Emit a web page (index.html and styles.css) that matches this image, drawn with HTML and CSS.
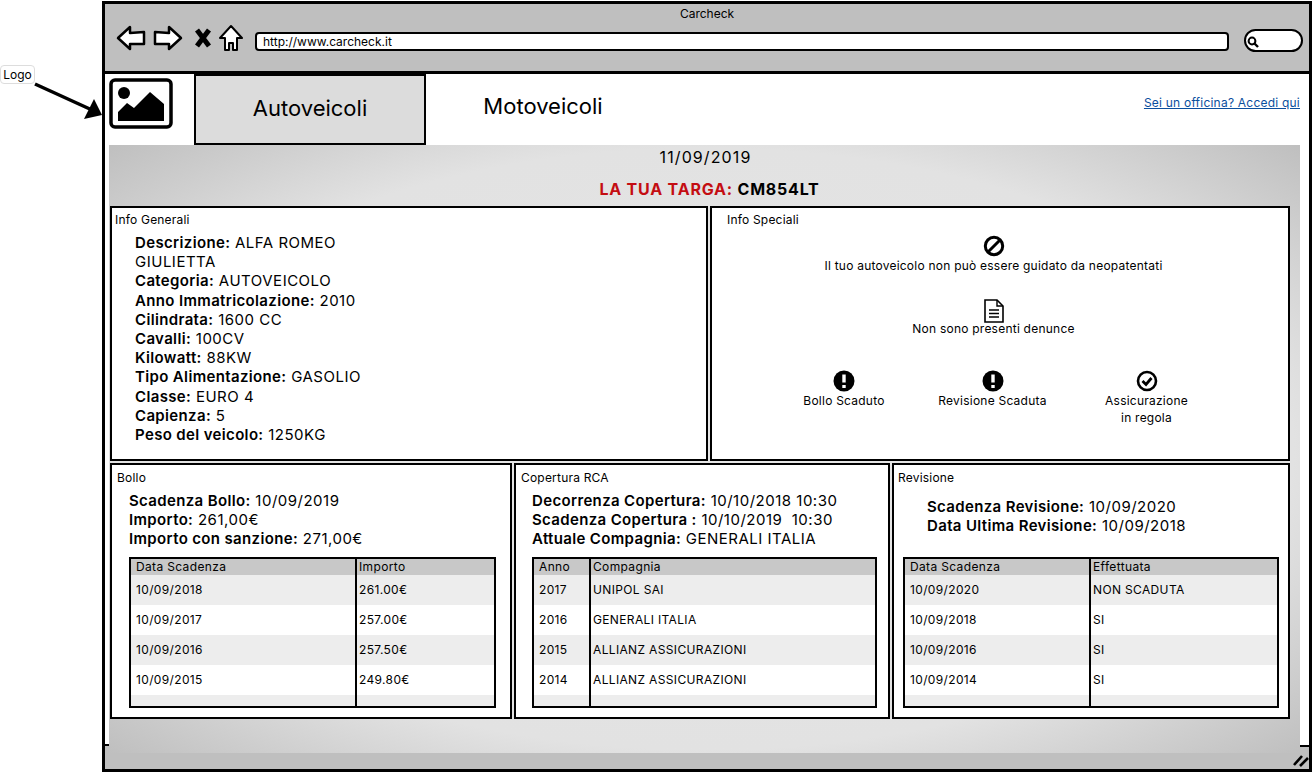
FILE: index.html
```html
<!DOCTYPE html>
<html lang="en">

<head>
    <meta charset="UTF-8">
    <title>Carcheck</title>
    <link rel="stylesheet" href="styles.css">
</head>

<body>

    <!-- Annotation outside the browser window -->
    <div class="callout">Logo</div>
    <svg class="callout-arrow" width="72" height="40" viewBox="0 0 72 40">
        <path d="M1 2 L58 28" fill="none" stroke="#000" stroke-width="3.5" />
        <path d="M50 37 L68 33 L60 17 Z" fill="#000" />
    </svg>

    <div class="window">
        <div class="titlebar">
            <div class="title">Carcheck</div>
            <div class="toolbar">
                <svg class="tool-icon back" width="30" height="28" viewBox="0 0 30 28">
                    <path d="M2 14 L14 3 L14 9 L28 8 L28 20 L14 20 L14 25 Z" fill="#fff" stroke="#000" stroke-width="2.5" stroke-linejoin="round" />
                </svg>
                <svg class="tool-icon forward" width="30" height="28" viewBox="0 0 30 28">
                    <path d="M28 14 L16 3 L16 9 L2 8 L2 20 L16 20 L16 25 Z" fill="#fff" stroke="#000" stroke-width="2.5" stroke-linejoin="round" />
                </svg>
                <svg class="tool-icon stop" width="18" height="20" viewBox="0 0 18 20">
                    <path d="M3 2 L15 18 M15 2 L3 18" fill="none" stroke="#000" stroke-width="5" />
                </svg>
                <svg class="tool-icon home" width="24" height="28" viewBox="0 0 24 28">
                    <path d="M12 2 L23 14 L18 14 L18 26 L14 26 L14 19 L10 19 L10 26 L6 26 L6 14 L1 14 Z" fill="#fff" stroke="#000" stroke-width="2" stroke-linejoin="round" />
                </svg>
                <div class="url">http://www.carcheck.it</div>
                <div class="search">
                    <svg width="12" height="12" viewBox="0 0 12 12">
                        <circle cx="5" cy="5" r="3.4" fill="none" stroke="#000" stroke-width="2" />
                        <path d="M7.5 7.5 L11 11" stroke="#000" stroke-width="2.4" />
                    </svg>
                </div>
            </div>
        </div>

        <div class="nav">
            <svg class="logo" width="64" height="52" viewBox="0 0 64 52">
                <rect x="2" y="2" width="60" height="47" rx="4" fill="#fff" stroke="#000" stroke-width="3.5" />
                <circle cx="15" cy="15" r="6" fill="#000" />
                <path d="M9 43 L9 34 L18 25 L25 30 L41 14 L55 26 L55 43 Z" fill="#000" />
            </svg>
            <div class="tab tab-active">Autoveicoli</div>
            <div class="tab">Motoveicoli</div>
            <a class="officina" href="#">Sei un officina? Accedi qui</a>
        </div>

        <div class="panel">
            <div class="panel-date">11/09/2019</div>
            <div class="panel-plate"><span class="plate-label">LA TUA TARGA:</span> CM854LT</div>

            <div class="row row-top">
                <section class="card card-generali">
                    <div class="card-title">Info Generali</div>
                    <div class="facts">
                        <b>Descrizione:</b> ALFA ROMEO<br>GIULIETTA<br>
                        <b>Categoria:</b> AUTOVEICOLO<br>
                        <b>Anno Immatricolazione:</b> 2010<br>
                        <b>Cilindrata:</b> 1600 CC<br>
                        <b>Cavalli:</b> 100CV<br>
                        <b>Kilowatt:</b> 88KW<br>
                        <b>Tipo Alimentazione:</b> GASOLIO<br>
                        <b>Classe:</b> EURO 4<br>
                        <b>Capienza:</b> 5<br>
                        <b>Peso del veicolo:</b> 1250KG
                    </div>
                </section>

                <section class="card card-speciali">
                    <div class="card-title">Info Speciali</div>
                    <div class="notice notice-first">
                        <svg width="22" height="22" viewBox="0 0 22 22">
                            <circle cx="11" cy="11" r="8.7" fill="none" stroke="#000" stroke-width="3" />
                            <path d="M5 17 L17 5" stroke="#000" stroke-width="3" />
                        </svg>
                        <span>Il tuo autoveicolo non può essere guidato da neopatentati</span>
                    </div>
                    <div class="notice notice-second">
                        <svg width="22" height="26" viewBox="0 0 22 26">
                            <path d="M2 2 L14 2 L20 8 L20 24 L2 24 Z" fill="#fff" stroke="#000" stroke-width="1.6" />
                            <path d="M14 2 L14 8 L20 8" fill="none" stroke="#000" stroke-width="1.4" />
                            <path d="M6 12 H16 M6 15.5 H16 M6 19 H16" stroke="#000" stroke-width="1.4" />
                        </svg>
                        <span>Non sono presenti denunce</span>
                    </div>
                    <div class="status-row">
                        <div class="notice">
                            <svg width="22" height="22" viewBox="0 0 22 22">
                                <circle cx="11" cy="11" r="10.5" fill="#000" />
                                <path d="M11 4.5 V12.5 M11 15 V18" stroke="#fff" stroke-width="3.4" />
                            </svg>
                            <span>Bollo Scaduto</span>
                        </div>
                        <div class="notice">
                            <svg width="22" height="22" viewBox="0 0 22 22">
                                <circle cx="11" cy="11" r="10.5" fill="#000" />
                                <path d="M11 4.5 V12.5 M11 15 V18" stroke="#fff" stroke-width="3.4" />
                            </svg>
                            <span>Revisione Scaduta</span>
                        </div>
                        <div class="notice">
                            <svg width="22" height="22" viewBox="0 0 22 22">
                                <circle cx="11" cy="11" r="9" fill="none" stroke="#000" stroke-width="2.6" />
                                <path d="M6.5 11 L10 14.5 L15.5 8" fill="none" stroke="#000" stroke-width="2.8" />
                            </svg>
                            <span>Assicurazione<br>in regola</span>
                        </div>
                    </div>
                </section>
            </div>

            <div class="row row-bottom">
                <section class="card card-bollo">
                    <div class="card-title">Bollo</div>
                    <div class="facts">
                        <b>Scadenza Bollo:</b> 10/09/2019<br>
                        <b>Importo:</b> 261,00€<br>
                        <b>Importo con sanzione:</b> 271,00€
                    </div>
                    <table class="history">
                        <colgroup>
                            <col class="col-bollo">
                            <col>
                        </colgroup>
                        <tr><th>Data Scadenza</th><th>Importo</th></tr>
                        <tr><td>10/09/2018</td><td>261.00€</td></tr>
                        <tr><td>10/09/2017</td><td>257.00€</td></tr>
                        <tr><td>10/09/2016</td><td>257.50€</td></tr>
                        <tr><td>10/09/2015</td><td>249.80€</td></tr>
                        <tr class="filler"><td></td><td></td></tr>
                    </table>
                </section>

                <section class="card card-rca">
                    <div class="card-title">Copertura RCA</div>
                    <div class="facts">
                        <b>Decorrenza Copertura:</b> 10/10/2018 10:30<br>
                        <b>Scadenza Copertura :</b> 10/10/2019&nbsp; 10:30<br>
                        <b>Attuale Compagnia:</b> GENERALI ITALIA
                    </div>
                    <table class="history">
                        <colgroup>
                            <col class="col-rca">
                            <col>
                        </colgroup>
                        <tr><th>Anno</th><th>Compagnia</th></tr>
                        <tr><td>2017</td><td>UNIPOL SAI</td></tr>
                        <tr><td>2016</td><td>GENERALI ITALIA</td></tr>
                        <tr><td>2015</td><td>ALLIANZ ASSICURAZIONI</td></tr>
                        <tr><td>2014</td><td>ALLIANZ ASSICURAZIONI</td></tr>
                        <tr class="filler"><td></td><td></td></tr>
                    </table>
                </section>

                <section class="card card-revisione">
                    <div class="card-title">Revisione</div>
                    <div class="facts">
                        <b>Scadenza Revisione:</b> 10/09/2020<br>
                        <b>Data Ultima Revisione:</b> 10/09/2018
                    </div>
                    <table class="history">
                        <colgroup>
                            <col class="col-revisione">
                            <col>
                        </colgroup>
                        <tr><th>Data Scadenza</th><th>Effettuata</th></tr>
                        <tr><td>10/09/2020</td><td>NON SCADUTA</td></tr>
                        <tr><td>10/09/2018</td><td>SI</td></tr>
                        <tr><td>10/09/2016</td><td>SI</td></tr>
                        <tr><td>10/09/2014</td><td>SI</td></tr>
                        <tr class="filler"><td></td><td></td></tr>
                    </table>
                </section>
            </div>
        </div>

        <div class="statusbar">
            <svg width="16" height="14" viewBox="0 0 16 14">
                <path d="M1 12 L9 3 M7 13 L15 5" stroke="#000" stroke-width="2.6" />
            </svg>
        </div>
    </div>

</body>

</html>
```

FILE: styles.css
```css
body {
    font-family: Inter, "Liberation Sans", sans-serif;
    margin: 0;
    padding: 0;
    background-color: #fff;
    color: #000;
}

b {
    font-weight: 600;
    letter-spacing: 0.35px;
}

.callout {
    position: absolute;
    left: 0;
    top: 65px;
    width: 35px;
    height: 19px;
    box-sizing: border-box;
    border: 1px solid #ddd;
    border-radius: 4px;
    background-color: #fff;
    font-size: 12px;
    line-height: 17px;
    text-align: center;
}

.callout-arrow {
    position: absolute;
    left: 34px;
    top: 82px;
}

.window {
    box-sizing: border-box;
    width: 1210px;
    height: 771px;
    margin: 1px 0 0 102px;
    border: 3px solid #000;
    display: flex;
    flex-direction: column;
}

.titlebar {
    height: 70px;
    box-sizing: border-box;
    flex-shrink: 0;
    background-color: #bfbfbf;
    border-bottom: 3px solid #000;
}

.title {
    padding-top: 3px;
    font-size: 12px;
    line-height: 14px;
    text-align: center;
}

.toolbar {
    display: flex;
    align-items: flex-start;
    padding: 3px 0 0 11px;
}

.tool-icon {
    flex-shrink: 0;
}

.forward {
    margin-left: 7px;
}

.stop {
    margin: 4px 0 0 11px;
}

.home {
    margin: 0 0 0 7px;
}

.url {
    flex: 1;
    height: 19px;
    box-sizing: border-box;
    margin: 8px 0 0 12px;
    padding-left: 6px;
    background-color: #fff;
    border: 2px solid #000;
    border-radius: 4px;
    font-size: 12px;
    line-height: 15px;
}

.search {
    width: 59px;
    height: 23px;
    box-sizing: border-box;
    margin: 5px 6px 0 15px;
    padding: 5px 0 0 1px;
    background-color: #fff;
    border: 2px solid #000;
    border-radius: 12px;
}

.search svg {
    display: block;
}

.nav {
    height: 71px;
    flex-shrink: 0;
    display: flex;
    align-items: flex-start;
    background-color: #fff;
}

.logo {
    margin: 4px 21px 0 4px;
    flex-shrink: 0;
}

.tab {
    width: 232px;
    height: 71px;
    box-sizing: border-box;
    font-size: 22px;
    line-height: 65px;
    text-align: center;
}

.tab-active {
    background-color: #dcdcdc;
    border: 2px solid #000;
    margin-right: 1px;
}

.officina {
    margin: 21px 0 0 auto;
    padding-right: 9px;
    color: #0b4f9e;
    font-size: 12px;
    letter-spacing: 0.22px;
    line-height: 16px;
}

.panel {
    flex: 1;
    position: relative;
    margin-left: 4px;
    margin-right: 9px;
    padding: 0 10px 0 1px;
    background: radial-gradient(ellipse at center, #e6e6e6 0%, #e2e2e2 70%, #bfbfbf 100%);
}

/* The white page stops a little above the status bar on both sides */
.panel::before,
.panel::after {
    content: "";
    position: absolute;
    bottom: 0;
    box-sizing: border-box;
    background-color: #bfbfbf;
    border-top: 2px solid #000;
}

.panel::before {
    left: -4px;
    width: 4px;
    height: 9px;
}

.panel::after {
    right: -9px;
    width: 9px;
    height: 8px;
}

.panel-date {
    height: 24px;
    padding-left: 11px;
    font-size: 16px;
    letter-spacing: 1.1px;
    line-height: 24px;
    text-align: center;
}

.panel-plate {
    height: 37px;
    padding: 8px 0 0 19px;
    box-sizing: border-box;
    font-size: 16px;
    font-weight: 700;
    letter-spacing: 0.8px;
    line-height: 24px;
    text-align: center;
}

.plate-label {
    color: #c40d12;
}

.row {
    display: grid;
    gap: 2px;
}

.row-top {
    grid-template-columns: 598px 580px;
    height: 255px;
    margin-bottom: 2px;
}

.row-bottom {
    grid-template-columns: 402px 376px 398px;
    height: 256px;
}

.card {
    box-sizing: border-box;
    display: flex;
    flex-direction: column;
    background-color: #fff;
    border: 2px solid #000;
}

.card-title {
    font-size: 12px;
    letter-spacing: 0.2px;
    line-height: 16px;
}

.facts {
    font-size: 15px;
    letter-spacing: 0.5px;
    line-height: 19.2px;
}

.card-generali {
    padding: 4px 0 0 3px;
}

.card-generali .facts {
    margin: 5px 0 0 20px;
}

.card-speciali {
    padding: 4px 28px 0 15px;
}

.notice {
    display: flex;
    flex-direction: column;
    align-items: center;
    font-size: 12px;
    letter-spacing: 0.23px;
    line-height: 17px;
    text-align: center;
}

.notice-first {
    margin-top: 7px;
}

.notice-second {
    margin-top: 24px;
}

.notice-second svg {
    margin-bottom: -4px;
}

.status-row {
    display: grid;
    grid-template-columns: 146px 151px 157px;
    justify-content: center;
    margin: 33px 0 0 9px;
}

.row-bottom .card {
    padding-bottom: 9px;
}

.row-bottom .card-title {
    margin-top: 5px;
}

.card-bollo {
    padding-left: 17px;
    padding-right: 14px;
}

.card-bollo .card-title {
    margin-left: -12px;
}

.card-bollo .facts {
    margin-top: 5px;
}

.card-rca {
    padding-left: 16px;
    padding-right: 11px;
}

.card-rca .card-title {
    margin-left: -11px;
}

.card-rca .facts {
    margin-top: 5px;
}

.card-revisione {
    padding-left: 9px;
    padding-right: 9px;
}

.card-revisione .card-title {
    margin-left: -5px;
}

.card-revisione .facts {
    margin: 11px 0 0 24px;
}

.history {
    width: 100%;
    margin-top: auto;
    table-layout: fixed;
    border-collapse: separate;
    border-spacing: 0;
    border: 2px solid #000;
    font-size: 12px;
    letter-spacing: 0.35px;
}

.col-bollo {
    width: 224px;
}

.col-rca {
    width: 55px;
}

.col-revisione {
    width: 184px;
}

.history th {
    height: 16px;
    padding: 0 0 0 5px;
    background-color: #c8c8c8;
    font-weight: 400;
    line-height: 14px;
    text-align: left;
}

.history td {
    height: 28px;
    padding: 0 0 2px 5px;
}

.history th + th,
.history td + td {
    border-left: 2px solid #000;
    padding-left: 2px;
}

.history tr:nth-child(even) td {
    background-color: #ededed;
}

.history .filler td {
    height: 11px;
    padding-bottom: 0;
}

.statusbar {
    height: 16px;
    flex-shrink: 0;
    display: flex;
    justify-content: flex-end;
    background-color: #bfbfbf;
}
```
